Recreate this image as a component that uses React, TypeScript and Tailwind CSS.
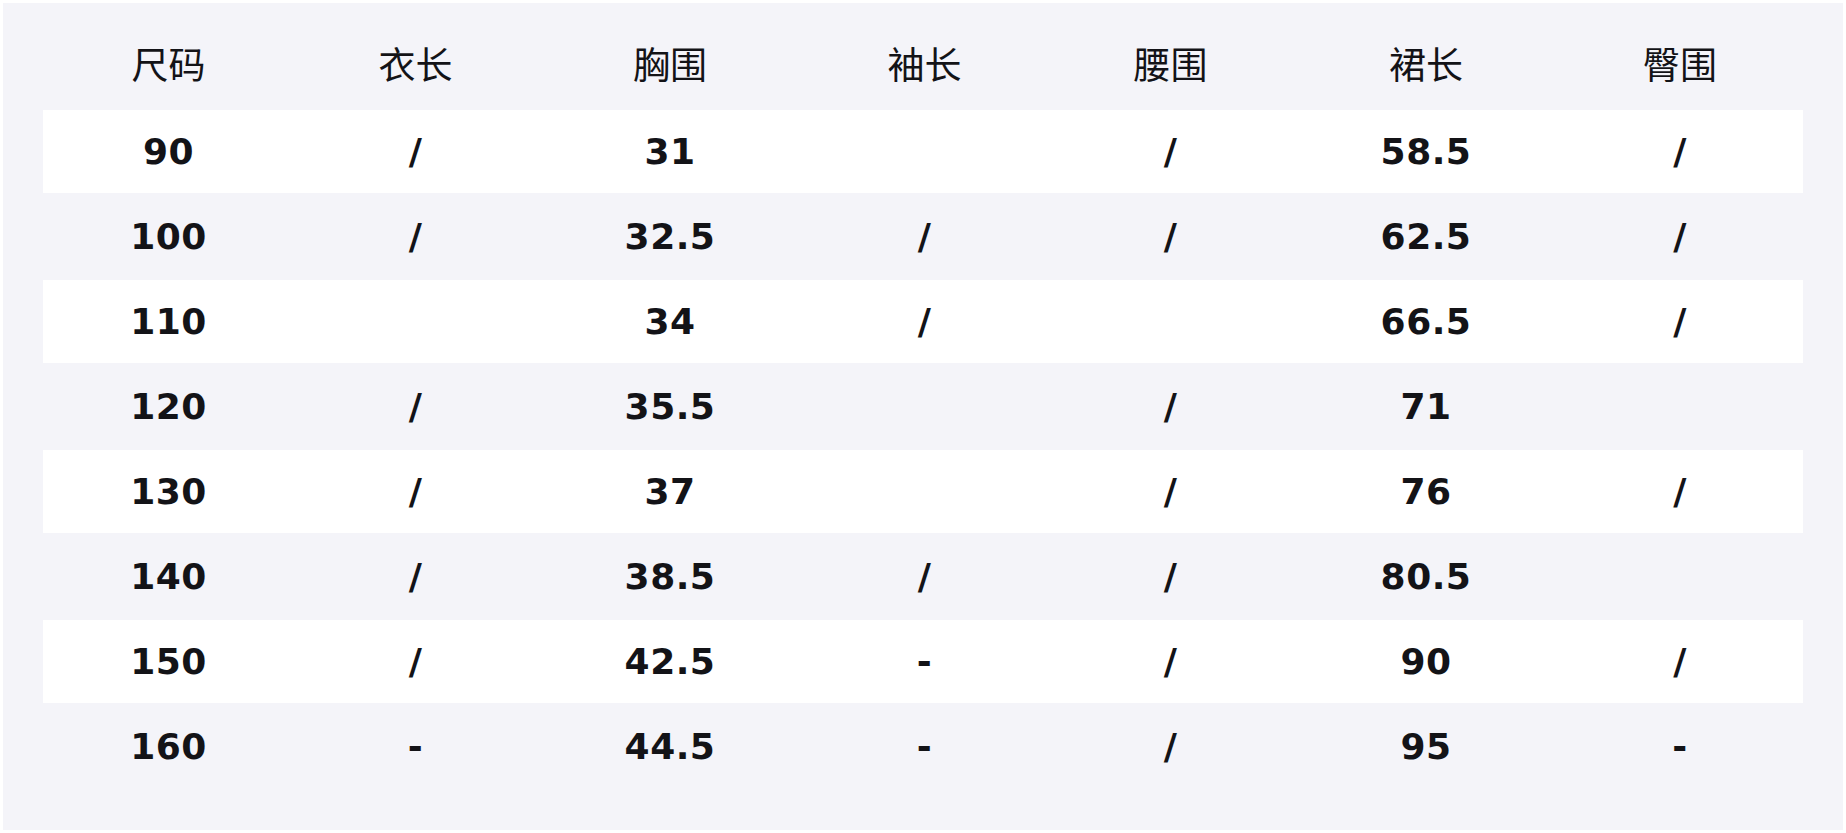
const headers = ["尺码", "衣长", "胸围", "袖长", "腰围", "裙长", "臀围"];

const rows: string[][] = [
  ["90", "/", "31", "", "/", "58.5", "/"],
  ["100", "/", "32.5", "/", "/", "62.5", "/"],
  ["110", "", "34", "/", "", "66.5", "/"],
  ["120", "/", "35.5", "", "/", "71", ""],
  ["130", "/", "37", "", "/", "76", "/"],
  ["140", "/", "38.5", "/", "/", "80.5", ""],
  ["150", "/", "42.5", "-", "/", "90", "/"],
  ["160", "-", "44.5", "-", "/", "95", "-"],
];

const gridCols =
  "grid grid-cols-[251px_243px_266px_243px_249px_262px_246px]";

export default function App() {
  return (
    <div className="bg-white p-[3px]">
      <section
        className="w-[1840px] h-[827px] bg-[#f4f4f9] px-10 pt-[22px] pb-[42px] text-[#131317]"
        style={{ fontFamily: '"DejaVu Sans", "Noto Sans CJK SC", sans-serif' }}
      >
        <div className="flex flex-col gap-[2px]">
          <div className={`${gridCols} h-[83px]`}>
            {headers.map((h) => (
              <div
                key={h}
                className="flex items-center justify-center text-[37px] leading-none font-normal"
              >
                {h}
              </div>
            ))}
          </div>
          {rows.map((row, i) => (
            <div
              key={row[0]}
              className={`${gridCols} h-[83px] ${i % 2 === 0 ? "bg-white" : ""}`}
            >
              {row.map((cell, j) => (
                <div
                  key={j}
                  className="flex items-center justify-center text-[36px] leading-none font-bold tracking-[0.5px]"
                >
                  {cell}
                </div>
              ))}
            </div>
          ))}
        </div>
      </section>
    </div>
  );
}
